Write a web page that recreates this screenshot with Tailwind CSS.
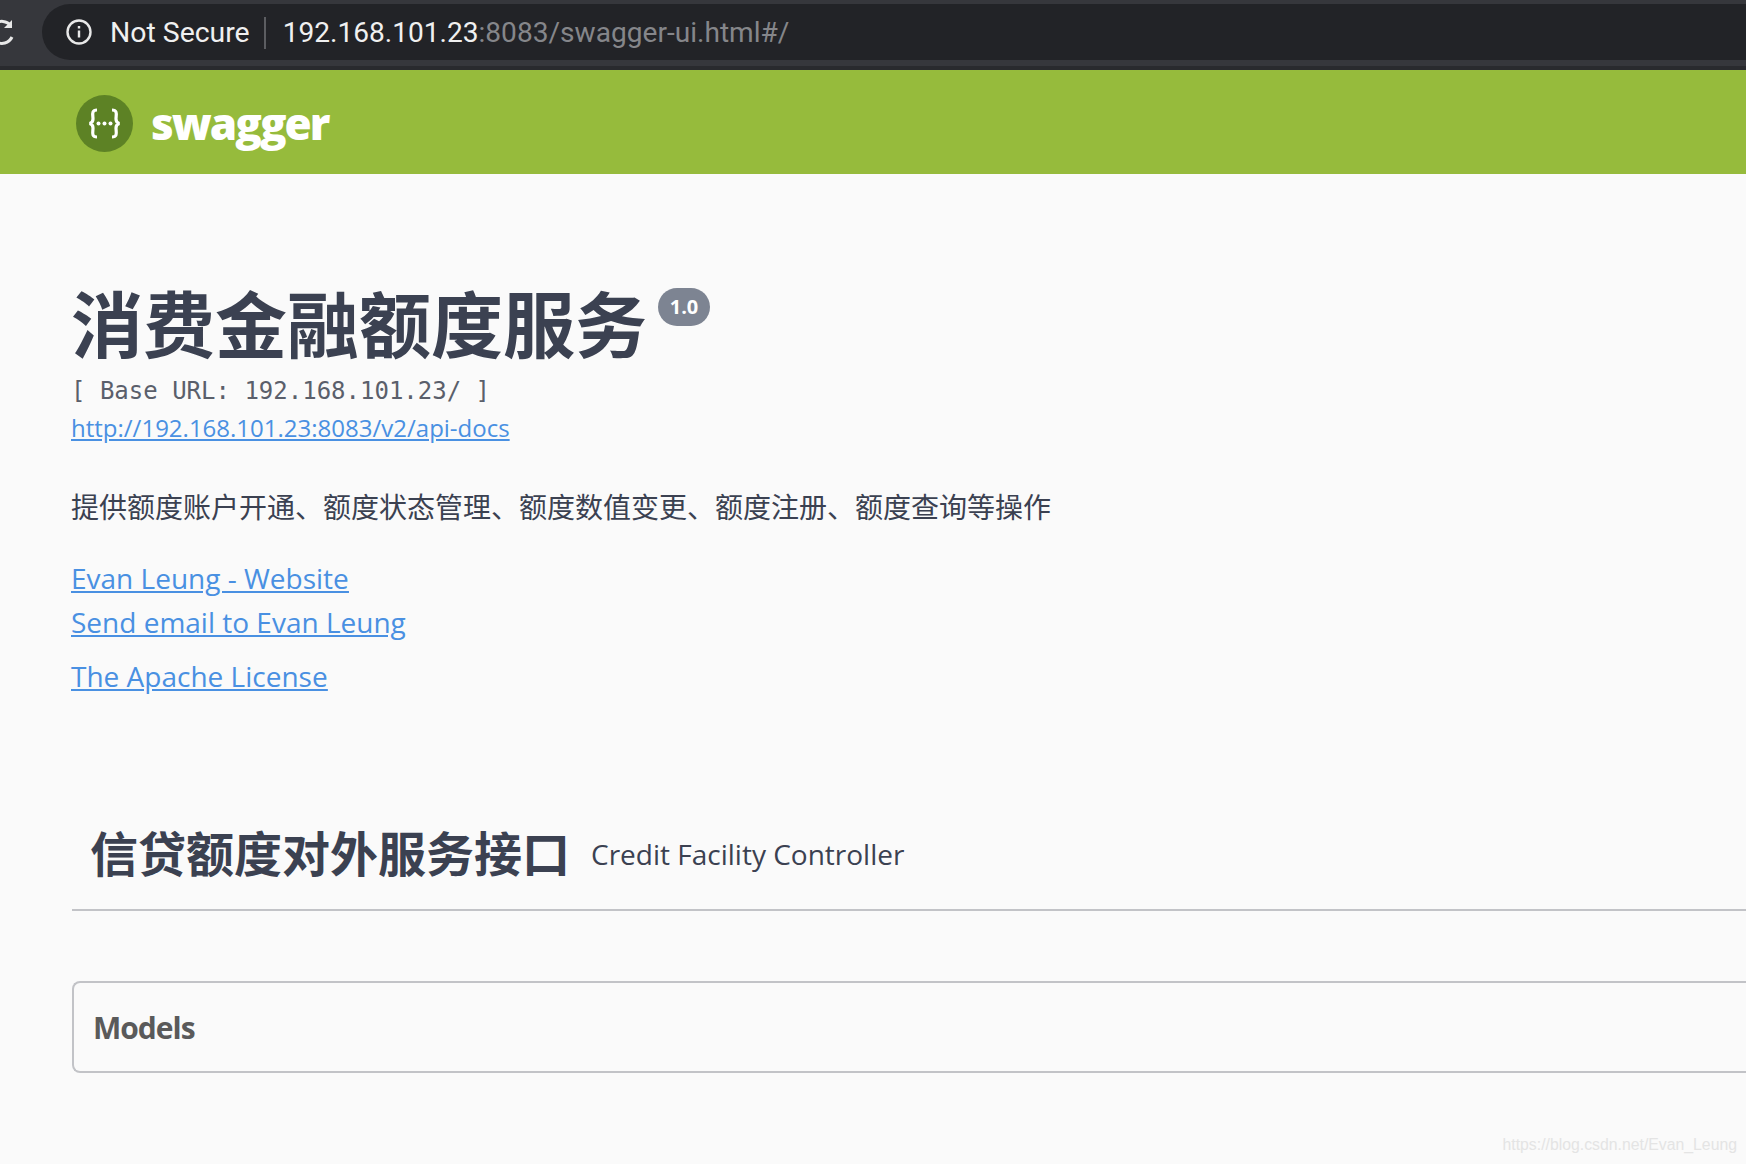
<!DOCTYPE html>
<html lang="en">
  <head>
    <meta charset="UTF-8" />
    <meta name="viewport" content="width=device-width, initial-scale=1.0" />
    <title>Swagger UI</title>
    <script src="https://cdn.jsdelivr.net/npm/@tailwindcss/browser@4"></script>
  </head>
  <body class="relative h-[1164px] w-[1746px] overflow-hidden bg-[#fafafa] font-['Open_Sans','Noto_Sans_CJK_SC',sans-serif] text-[#3b4151]">
    <!-- browser toolbar -->
    <div class="flex h-[70px] items-start overflow-hidden border-b-[4px] border-[#292a2e] bg-[#36373c]">
      <svg class="mt-[17px] ml-[-13px] h-[30px] w-[30px] shrink-0" viewBox="0 0 30 30" fill="none" stroke="#e8e8e8" stroke-width="3">
        <path d="M24 9a11 11 0 1 0 1 11" />
        <path d="M25 3v8h-8" fill="#e8e8e8" stroke="none" />
      </svg>
      <div class="mt-1 ml-[25px] flex h-[56px] flex-1 items-center rounded-l-[28px] bg-[#222327] pt-[2px] pl-[23px] font-['Roboto',sans-serif] text-[28.4px] text-[#f0f0f0]">
        <svg class="mb-[2px] h-[28px] w-[28px] shrink-0" viewBox="0 0 28 28" fill="none" stroke="#e8e8e8" stroke-width="2.4">
          <circle cx="14" cy="14" r="11.5" />
          <path d="M14 12.5v7M14 8v2.6" />
        </svg>
        <span class="ml-[17px]">Not Secure</span>
        <span class="mr-[17px] ml-[14px] h-[32px] w-[2px] bg-[#5c5d61]"></span>
        <span class="text-[28.1px]">192.168.101.23<span class="text-[#85868a]">:8083/swagger-ui.html#/</span></span>
      </div>
    </div>

    <!-- swagger topbar -->
    <header class="flex h-[104px] items-center bg-[#96bb3c] pt-[3px] pl-[76px]">
      <svg class="h-[57px] w-[57px]" viewBox="0 0 57 57">
        <circle cx="28.5" cy="28.5" r="28.5" fill="#5d8225" />
        <path d="M21 15c-6 0-4 5-4 9 0 3-1 4-3.500 4.500 2.500.5 3.500 1.500 3.500 4.500 0 4-2 9 4 9M36 15c6 0 4 5 4 9 0 3 1 4 3.500 4.500-2.500.5-3.500 1.500-3.500 4.500 0 4 2 9-4 9" fill="none" stroke="#fff" stroke-width="3.200" />
        <circle cx="22.500" cy="28.500" r="2" fill="#fff" />
        <circle cx="28.500" cy="28.500" r="2" fill="#fff" />
        <circle cx="34.500" cy="28.500" r="2" fill="#fff" />
      </svg>
      <span class="mb-[2px] ml-[18px] text-[44px] leading-none font-extrabold tracking-[-2px] text-white">swagger</span>
    </header>

    <!-- api info -->
    <main class="pl-[71px]">
      <section class="pt-[102px]">
        <div class="flex items-start">
          <h1 class="text-[72px] leading-[96px] font-bold">消费金融额度服务</h1>
          <span class="mt-[12px] ml-[11px] flex h-[38px] w-[52px] items-center justify-center rounded-[19px] bg-[#7d8492] text-[20px] font-bold text-white">1.0</span>
        </div>
        <p class="mt-[3px] font-['DejaVu_Sans_Mono',monospace] text-[24px] leading-[32px] text-[#5a5f6b]">[ Base URL: 192.168.101.23/ ]</p>
        <a class="mt-[2px] block text-[24px] leading-[38px] text-[#4990e2] underline" href="#">http://192.168.101.23:8083/v2/api-docs</a>
        <p class="mt-[39px] text-[28px] leading-[42px]">提供额度账户开通、额度状态管理、额度数值变更、额度注册、额度查询等操作</p>
        <div class="mt-[28px] text-[28px] leading-[44px] text-[#4990e2] underline">
          <a class="block" href="#">Evan Leung - Website</a>
          <a class="block" href="#">Send email to Evan Leung</a>
          <a class="mt-[10px] block" href="#">The Apache License</a>
        </div>
      </section>

      <!-- tag heading -->
      <section class="mt-[100px] ml-px flex h-[113px] items-center border-b-2 border-[#c2c3c7] pl-[18px]">
        <h2 class="text-[48px] leading-none font-bold">信贷额度对外服务接口</h2>
        <span class="ml-[21px] text-[28px]">Credit Facility Controller</span>
      </section>

      <!-- models -->
      <section class="mt-[70px] ml-px flex h-[92px] items-center rounded-l-[8px] border-y-2 border-l-2 border-[#c2c3c7] pl-[19px]">
        <h4 class="text-[30px] font-bold tracking-[-1px] text-[#5a5a5a]">Models</h4>
      </section>
    </main>

    <span class="absolute top-[1133px] right-[9px] font-['Liberation_Sans',sans-serif] text-[15.8px] text-[#e4e4e4]">https://blog.csdn.net/Evan_Leung</span>
  </body>
</html>
